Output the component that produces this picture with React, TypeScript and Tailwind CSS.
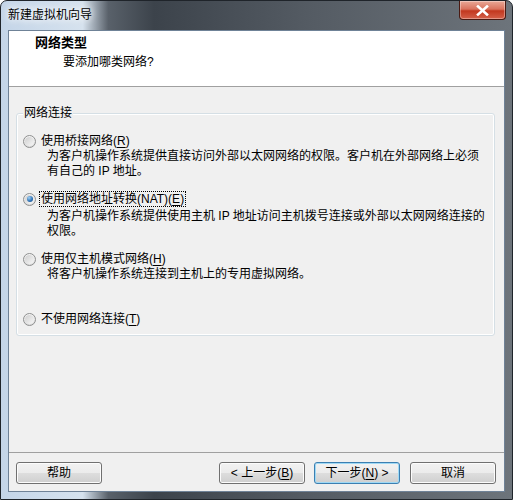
import React from "react";

function Radio({ checked }: { checked?: boolean }) {
  return (
    <span className="relative flex h-[13px] w-[13px] shrink-0 items-center justify-center rounded-full border border-[#8e8f8f] bg-[linear-gradient(180deg,#f4f4f4,#dcdcdc)]">
      <span className="flex h-[9px] w-[9px] items-center justify-center rounded-full bg-[linear-gradient(135deg,#cfcfcf,#f8f8f8)]">
        {checked && <span className="h-[6px] w-[6px] rounded-full bg-[radial-gradient(circle_at_35%_30%,#9fd0f5,#2c6fb3_60%,#1b4f86)]" />}
      </span>
    </span>
  );
}

function U({ c }: { c: string }) {
  return <span className="underline underline-offset-2">{c}</span>;
}

function Btn({ children, def }: { children: React.ReactNode; def?: boolean }) {
  return (
    <button
      className={
        def
          ? "flex h-[22px] w-[86px] items-center justify-center rounded-[3px] border border-[#3c7fb1] bg-[linear-gradient(180deg,#f2f2f2_0%,#ebebeb_50%,#dddddd_51%,#cfcfcf_100%)] text-[12px] text-black shadow-[inset_0_0_0_1px_#9fd9f5]"
          : "flex h-[22px] w-[86px] items-center justify-center rounded-[3px] border border-[#707070] bg-[linear-gradient(180deg,#f2f2f2_0%,#ebebeb_50%,#dddddd_51%,#cfcfcf_100%)] text-[12px] text-black shadow-[inset_0_0_0_1px_#fcfcfc]"
      }
    >
      {children}
    </button>
  );
}

const options = [
  {
    label: (
      <>
        使用桥接网络(<U c="R" />)
      </>
    ),
    desc: ["为客户机操作系统提供直接访问外部以太网网络的权限。客户机在外部网络上必须", "有自己的 IP 地址。"],
  },
  {
    label: (
      <>
        使用网络地址转换(NAT)(<U c="E" />)
      </>
    ),
    desc: ["为客户机操作系统提供使用主机 IP 地址访问主机拨号连接或外部以太网网络连接的", "权限。"],
    checked: true,
  },
  {
    label: (
      <>
        使用仅主机模式网络(<U c="H" />)
      </>
    ),
    desc: ["将客户机操作系统连接到主机上的专用虚拟网络。"],
  },
  {
    label: (
      <>
        不使用网络连接(<U c="T" />)
      </>
    ),
    desc: [],
  },
];

export default function App() {
  return (
    <div className="flex h-[500px] w-[513px] flex-col overflow-hidden rounded-t-[7px] border border-[#1f242a] bg-[linear-gradient(90deg,#c4d5e8_0%,#d6e2ee_16%,#59616a_21%,#3c434b_30%,#545b63_60%,#6d747b_100%)] font-['Liberation_Sans','Noto_Sans_CJK_SC',sans-serif] text-black">
      {/* Title bar */}
      <div className="flex h-[29px] shrink-0 items-start justify-between">
        <div className="pl-[7px] pt-[6px] text-[12px] leading-[16px] [text-shadow:0_0_6px_#fff,0_0_10px_#fff]">新建虚拟机向导</div>
        <div className="mr-[6px] flex h-[19px] w-[47px] items-center justify-center rounded-b-[4px] border border-t-0 border-[#4a1a12] bg-[linear-gradient(180deg,#e9a897_0%,#d9735e_45%,#c2381f_55%,#d46049_100%)] shadow-[inset_0_0_0_1px_rgba(255,255,255,0.35)]">
          <svg width="13" height="11" viewBox="0 0 13 11">
            <path d="M2 1.5 L11 9.5 M11 1.5 L2 9.5" stroke="#fff" strokeWidth="2.6" strokeLinecap="square" />
          </svg>
        </div>
      </div>

      {/* Client area */}
      <div className="mx-[7px] mb-[7px] flex flex-1 flex-col border border-[#6f8297] bg-[#f0f0f0]">
        {/* Header */}
        <div className="h-[56px] shrink-0 border-b border-[#a0a0a0] bg-white pl-[26px] pt-[4px]">
          <div className="text-[13px] font-bold leading-[16px]">网络类型</div>
          <div className="ml-[28px] mt-[3px] text-[12px] leading-[16px]">要添加哪类网络?</div>
        </div>

        {/* Body */}
        <div className="flex flex-1 flex-col">
          <div className="relative ml-[7px] mr-[9px] mt-[26px] rounded-[3px] border border-[#d5dfe5] pb-[8px] pl-[6px] pt-[19px] shadow-[inset_0_0_0_1px_#ffffff]">
            <div className="absolute left-[6px] top-[-8px] bg-[#f0f0f0] px-[1px] text-[12px] leading-[14px]">网络连接</div>
            <div className="flex flex-col">
              {options.map((o, i) => (
                <div key={i} className={i === 0 ? "" : i === 3 ? "mt-[29px]" : "mt-[12px]"}>
                  <div className="flex h-[16px] items-center gap-[3px]">
                    <Radio checked={o.checked} />
                    <span className={"border px-[1px] text-[12px] leading-[14px] " + (o.checked ? "border-dotted border-black" : "border-transparent")}>
                      {o.label}
                    </span>
                  </div>
                  <div className={o.checked ? "mt-[2px]" : ""}>
                    {o.desc.map((d, j) => (
                      <div key={j} className="whitespace-nowrap pl-[24px] text-[12px] leading-[15px]">
                        {d}
                      </div>
                    ))}
                  </div>
                </div>
              ))}
            </div>
          </div>

          <div className="flex-1" />
          <div className="border-t border-[#a0a0a0]" />

          <div className="mb-[7px] mt-[9px] flex items-center pl-[7px] pr-[8px]">
            <Btn>帮助</Btn>
            <div className="flex-1" />
            <div className="flex gap-[9px]">
              <Btn>
                &lt; 上一步(<U c="B" />)
              </Btn>
              <Btn def>
                下一步(<U c="N" />) &gt;
              </Btn>
              <div className="ml-[1px]">
                <Btn>取消</Btn>
              </div>
            </div>
          </div>
        </div>
      </div>
    </div>
  );
}
